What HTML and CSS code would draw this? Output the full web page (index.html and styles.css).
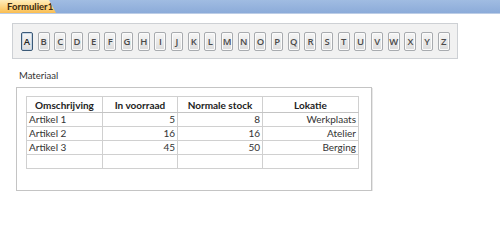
FILE: index.html
```html
<!DOCTYPE html>
<html>
<head>
<meta charset="utf-8">
<link rel="stylesheet" href="styles.css">
</head>
<body>
<div class="tabbar">
  <div class="tab">Formulier1</div>
</div>
<div class="form">
  <div class="letters">
    <button class="letter focused">A</button>
    <button class="letter">B</button>
    <button class="letter">C</button>
    <button class="letter">D</button>
    <button class="letter">E</button>
    <button class="letter">F</button>
    <button class="letter">G</button>
    <button class="letter">H</button>
    <button class="letter">I</button>
    <button class="letter">J</button>
    <button class="letter">K</button>
    <button class="letter">L</button>
    <button class="letter">M</button>
    <button class="letter">N</button>
    <button class="letter">O</button>
    <button class="letter">P</button>
    <button class="letter">Q</button>
    <button class="letter">R</button>
    <button class="letter">S</button>
    <button class="letter">T</button>
    <button class="letter">U</button>
    <button class="letter">V</button>
    <button class="letter">W</button>
    <button class="letter">X</button>
    <button class="letter">Y</button>
    <button class="letter">Z</button>
  </div>
  <div class="label">Materiaal</div>
  <div class="subform">
    <table class="grid">
      <colgroup>
        <col class="c1"><col class="c2"><col class="c3"><col class="c4">
      </colgroup>
      <thead>
        <tr><th>Omschrijving</th><th>In voorraad</th><th>Normale stock</th><th>Lokatie</th></tr>
      </thead>
      <tbody>
        <tr><td>Artikel 1</td><td class="r">5</td><td class="r">8</td><td class="r">Werkplaats</td></tr>
        <tr><td>Artikel 2</td><td class="r">16</td><td class="r">16</td><td class="r">Atelier</td></tr>
        <tr><td>Artikel 3</td><td class="r">45</td><td class="r">50</td><td class="r">Berging</td></tr>
        <tr><td></td><td></td><td></td><td></td></tr>
      </tbody>
    </table>
  </div>
</div>
</body>
</html>
```
FILE: styles.css
```css
html, body {
  margin: 0;
  padding: 0;
  background: #ffffff;
  font-family: Lato, "Open Sans", sans-serif;
  color: #333;
}
.tabbar {
  height: 13px;
  background: linear-gradient(#a0bce2, #8cabd9);
  border-bottom: 1px solid #bccde6;
  position: relative;
}
.tab {
  position: absolute;
  left: 0;
  top: 0;
  height: 13px;
  width: 56px;
  box-sizing: border-box;
  padding-left: 7px;
  font-size: 9.5px;
  line-height: 13px;
  font-weight: bold;
  color: #3a2a10;
  background: linear-gradient(#ffeebc, #fdd27a 60%, #f9bd52);
  clip-path: polygon(0 0, 49px 0, 56px 100%, 0 100%);
}
.form {
  padding: 9px 0 0 12px;
}
.letters {
  width: 446px;
  height: 36px;
  box-sizing: border-box;
  border: 1px solid #cdd0d4;
  background: #f1f1f1;
  display: flex;
  gap: 4.68px;
  padding: 8px 0 0 8px;
}
.letter {
  width: 12px;
  height: 19px;
  padding: 0;
  margin: 0;
  box-sizing: border-box;
  border: 1px solid #a8abaf;
  border-radius: 2px;
  background: linear-gradient(#f6f6f6, #dcdcdc);
  font-family: "Open Sans", sans-serif;
  font-size: 9.5px;
  font-weight: 600;
  color: #4a4a4a;
  line-height: 17px;
  text-align: center;
  box-shadow: inset 0 0 0 1px #fbfbfb;
}
.letter.focused {
  border-color: #3c5a78;
  color: #222;
  box-shadow: inset 0 0 0 1px #c6d6e6;
}
.label {
  margin: 11px 0 0 7px;
  font-size: 9.5px;
  line-height: 12px;
  color: #333;
}
.subform {
  margin: 5px 0 0 4px;
  width: 356px;
  height: 104px;
  box-sizing: border-box;
  border: 1px solid #c4c4c4;
  box-shadow: 1px 1px 0 #e8e8e8;
  padding: 8px 0 0 9px;
}
.grid {
  border-collapse: collapse;
  width: 332px;
  table-layout: fixed;
  font-size: 10px;
  border: 1px solid #a9a9a9;
}
.c1 { width: 76px; }
.c2 { width: 75px; }
.c3 { width: 85px; }
.c4 { width: 96px; }
.grid th, .grid td {
  border: 1px solid #d0d0d0;
  padding: 0 2px;
  white-space: nowrap;
  overflow: hidden;
}
.grid th {
  height: 15px;
  font-weight: bold;
  text-align: center;
  color: #222;
  border-bottom-color: #c4c4c4;
}
.grid td {
  height: 13px;
  line-height: 13px;
  color: #333;
}
.grid td.r { text-align: right; }
```
